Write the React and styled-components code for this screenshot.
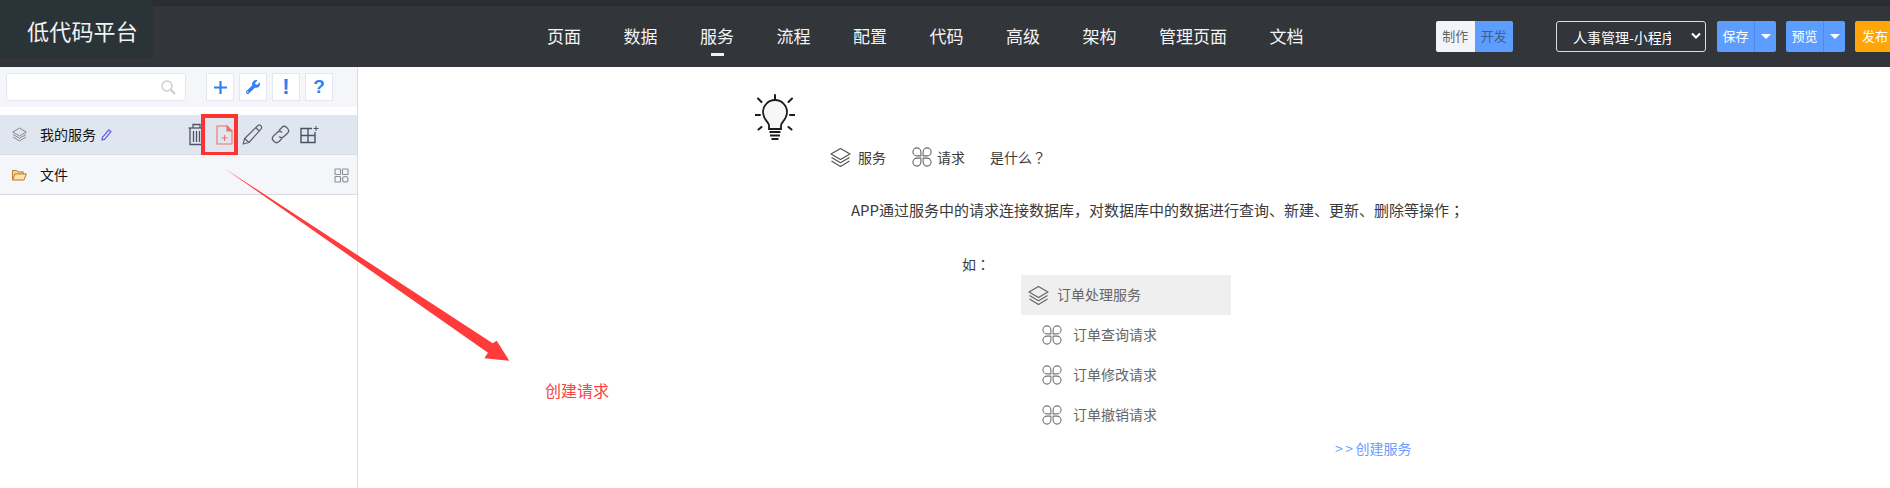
import React from "react";
import styled, { createGlobalStyle } from "styled-components";
import { FaWrench } from "react-icons/fa";

const GlobalStyle = createGlobalStyle`
  html, body {
    margin: 0;
    padding: 0;
    background: #fff;
  }
  body {
    font-family: "Noto Sans CJK SC", "Liberation Sans", sans-serif;
    overflow: hidden;
  }
  * {
    box-sizing: border-box;
  }
`;

const Page = styled.div`
  position: relative;
  width: 1890px;
  height: 488px;
  overflow: hidden;
  display: flex;
  flex-direction: column;
`;

/* header */
const Header = styled.header`
  flex: none;
  height: 67px;
  display: flex;
  background: #32353a;
  border-top: 5px solid #2c2d31;
  box-shadow: inset 0 1px 0 #26272a;
`;

const Logo = styled.div`
  flex: none;
  width: 153px;
  height: 58px;
  margin-top: -5px;
  padding: 12px 0 0 27px;
  background: #2a3338;
  color: #f2f2f2;
  font-size: 22px;
  line-height: 37px;
  letter-spacing: 0.2px;
`;

const Nav = styled.nav`
  flex: none;
  display: flex;
  gap: 42.5px;
  margin-left: 394px;
  width: 889px;
`;

const NavItem = styled.a`
  position: relative;
  color: #f4f4f4;
  font-size: 17px;
  line-height: 24px;
  padding-top: 19px;

  ${(p) =>
    p.$active &&
    `
    &::after {
      content: "";
      position: absolute;
      left: 11px;
      top: 48px;
      width: 13px;
      height: 3px;
      background: #f0f0f0;
    }
  `}
`;

const Toggle = styled.div`
  flex: none;
  display: flex;
  width: 77px;
  height: 31px;
  margin-top: 16px;
  border-radius: 2px;
  overflow: hidden;
`;

const ToggleSide = styled.span`
  flex: 1;
  text-align: center;
  font-size: 13px;
  line-height: 29px;
  color: ${(p) => (p.$on ? "#3f5f8f" : "#666")};
  background: ${(p) => (p.$on ? "#5c9dff" : "#f2f4fa")};
`;

const SelectWrap = styled.div`
  position: relative;
  flex: none;
  width: 150px;
  height: 31px;
  margin: 16px 0 0 43px;

  svg {
    position: absolute;
    right: 5px;
    top: 11px;
    pointer-events: none;
  }
`;

const AppSelect = styled.select`
  appearance: none;
  width: 100%;
  height: 100%;
  padding: 0 34px 0 16px;
  background: #32353a;
  border: 1px solid #ddd;
  border-radius: 3px;
  color: #fff;
  font-family: inherit;
  font-size: 14px;
`;

const SplitButton = styled.div`
  flex: none;
  display: flex;
  width: 59px;
  height: 31px;
  margin: 16px 0 0 ${(p) => p.$gap}px;
  border-radius: 2px;
  overflow: hidden;
  background: #5c9dff;
  color: #fff;
`;

const SplitLabel = styled.span`
  width: 38px;
  text-align: center;
  font-size: 13px;
  line-height: 29px;
  border-right: 1px solid #4d8be8;
`;

const SplitCaret = styled.span`
  flex: 1;
  display: flex;
  align-items: center;
  justify-content: center;

  &::before {
    content: "";
    border-left: 5px solid transparent;
    border-right: 5px solid transparent;
    border-top: 5px solid #fff;
  }
`;

const PublishButton = styled.span`
  flex: none;
  width: 40px;
  height: 31px;
  margin: 16px 0 0 10px;
  padding-left: 7px;
  border-radius: 2px;
  background: #ffa50a;
  color: #fff;
  font-size: 13px;
  line-height: 29px;
`;

/* body */
const Body = styled.div`
  flex: 1;
  display: flex;
  min-height: 0;
`;

const Sidebar = styled.aside`
  flex: none;
  width: 358px;
  border-right: 1px solid #dcdcdc;
`;

const SearchBar = styled.div`
  height: 40px;
  padding: 6px 0 0 6px;
  display: flex;
  background: #f5f6fa;
`;

const SearchBox = styled.div`
  width: 180px;
  height: 28px;
  display: flex;
  align-items: center;
  justify-content: flex-end;
  padding-right: 9px;
  background: #fff;
  border: 1px solid #e4e7f0;
  border-radius: 3px;
`;

const ToolButton = styled.span`
  width: 28px;
  height: 28px;
  margin-left: ${(p) => p.$gap || 5}px;
  display: flex;
  align-items: center;
  justify-content: center;
  background: #fff;
  border: 1px solid #e4e7f0;
  color: #2f80f5;
  font-family: "Liberation Sans", sans-serif;
  font-size: ${(p) => p.$size || 19}px;
  font-weight: 700;
`;

const TreeRow = styled.div`
  position: relative;
  height: 40px;
  margin-top: ${(p) => p.$top || 0}px;
  display: flex;
  align-items: center;
  padding-left: 12px;
  background: ${(p) => (p.$selected ? "#e0e6f0" : "#f5f6fa")};
  border-bottom: 1px solid #d9dce2;
  color: #111;
  font-size: 14px;
`;

const RowLabel = styled.span`
  margin: 0 0 2px ${(p) => p.$gap}px;
  line-height: 20px;
`;

const Actions = styled.div`
  position: absolute;
  left: 182px;
  top: 0;
  height: 39px;
  display: flex;
`;

const ActionSlot = styled.span`
  width: 28.25px;
  display: flex;
  align-items: center;
  justify-content: center;
`;

const RedFrame = styled.div`
  position: absolute;
  left: 201px;
  top: -1px;
  width: 37px;
  height: 42px;
  border: 4px solid #fb3333;
`;

const EndIcon = styled.span`
  position: absolute;
  left: 334px;
  top: 13px;
  display: flex;
`;

const Main = styled.main`
  flex: 1;
  display: flex;
  flex-direction: column;
  align-items: flex-start;
  padding-top: 27px;
  color: #3a3a3a;
  font-size: 14px;
`;

const Bulb = styled.div`
  margin-left: 397px;
  height: 48px;
  display: flex;
`;

const Intro = styled.div`
  margin: 5px 0 0 472px;
  height: 20px;
  display: flex;
  align-items: center;
  line-height: 20px;
`;

const IntroPart = styled.span`
  display: flex;
  margin-left: ${(p) => p.$gap}px;
`;

/* full-width punctuation sits centred in the reference */
const Punct = styled.span`
  font-family: "Noto Sans CJK TC", sans-serif;
`;

const Description = styled.p`
  margin: 33px 0 0 493px;
  font-size: 15px;
  line-height: 20px;
  white-space: nowrap;
`;

const ExampleLabel = styled.div`
  margin: 34px 0 0 604px;
  line-height: 20px;
`;

const Tree = styled.div`
  margin: 1px 0 0 663px;
  width: 210px;
  color: #666;

  span {
    margin-bottom: 2px;
  }
`;

const ServiceRow = styled.div`
  height: 40px;
  display: flex;
  align-items: center;
  padding-left: 7px;
  gap: 8px;
  background: #efefef;
`;

const RequestRow = styled.div`
  height: 40px;
  display: flex;
  align-items: center;
  padding-left: 21px;
  gap: 11px;
`;

const CreateLink = styled.a`
  margin: 3px 0 0 977px;
  color: #6a9dff;
  line-height: 20px;
  white-space: nowrap;
`;

const Chevrons = styled.span`
  letter-spacing: 2.5px;
`;

const Callout = styled.span`
  position: absolute;
  left: 545px;
  top: 378px;
  color: #f84545;
  font-size: 16px;
  line-height: 24px;
`;

const ArrowLayer = styled.svg`
  position: absolute;
  left: 0;
  top: 0;
  pointer-events: none;
`;

/* icons */
const LayersIcon = ({ size = 21, color = "#555", width = 1.2 }) => (
  <svg width={size} height={size} viewBox="0 0 21 21" fill="none" stroke={color} strokeWidth={width} strokeLinejoin="round">
    <path d="M10.5 1.5 20 7l-9.5 5.5L1 7z" />
    <path d="M1.5 10.5l9 5.2 9-5.2" />
    <path d="M1.5 14l9 5.5 9-5.5" />
  </svg>
);

const CloverIcon = ({ size = 20, color = "#777" }) => (
  <svg width={size} height={size} viewBox="0 0 20 20" fill="none" stroke={color} strokeWidth="1.1" strokeLinejoin="round">
    <path d="M8.9 8.900H4.900a4 4 0 1 1 4-4z" />
    <path d="M11.100 8.900h4a4 4 0 1 0-4-4z" />
    <path d="M8.900 11.100H4.900a4 4 0 1 0 4 4z" />
    <path d="M11.100 11.100h4a4 4 0 1 1-4 4z" />
  </svg>
);

const SearchIcon = () => (
  <svg width="15" height="15" viewBox="0 0 15 15" fill="none" stroke="#ccc" strokeWidth="1.4">
    <circle cx="6" cy="6" r="5" />
    <path d="M9.800 9.800 14 14" strokeWidth="2" />
  </svg>
);

const PlusIcon = () => (
  <svg width="13" height="13" viewBox="0 0 13 13" stroke="#2f80f5" strokeWidth="2.200">
    <path d="M6.500 0v13M0 6.500h13" />
  </svg>
);

const TinyPencil = () => (
  <svg width="11" height="12" viewBox="0 0 11 12" fill="none" stroke="#5a5ce6" strokeWidth="1.200" strokeLinejoin="round" style={{ marginLeft: 5 }}>
    <path d="M7.800 1 10 2.600 3.600 10.400 1 11l.4-2.600z" />
  </svg>
);

const TrashIcon = () => (
  <svg width="17" height="23" viewBox="0 0 17 23" fill="none" stroke="#4f5568" strokeWidth="1.300">
    <path d="M0.500 5h16" />
    <path d="M5 5V1.500h7V5" />
    <path d="M2 5v16.500h13V5" />
    <path d="M5.500 8v11M8.500 8v11M11.500 8v11" />
  </svg>
);

const FilePlusIcon = () => (
  <svg width="17" height="20" viewBox="0 0 17 20" fill="none" stroke="#f0706a" strokeWidth="1.100">
    <path d="M1 1h10l5 5v13H1z" />
    <path d="M11 1v5h5z" fill="#f0706a" />
    <path d="M8.500 10v6M5.500 13h6" />
  </svg>
);

const PencilIcon = () => (
  <svg width="21" height="21" viewBox="0 0 21 21" fill="none" stroke="#5b6170" strokeWidth="1.200" strokeLinejoin="round">
    <path d="M16 1.500c1-.8 2.300-.4 3 .4.800.9.900 2 .1 3L7 18.500 1.200 20l1.500-5.500z" />
    <path d="M13.800 3.700l3.600 3.300M2.700 14.500l4.300 4" />
  </svg>
);

const LinkIcon = () => (
  <svg width="19" height="19" viewBox="0 0 19 19" fill="none" stroke="#5b6170" strokeWidth="1.300">
    <path d="M8 5.500 10.800 2.500a3.400 3.400 0 0 1 4.800 0l.9.9a3.400 3.400 0 0 1 0 4.800L13 11.500a3.400 3.400 0 0 1-4.800 0" />
    <path d="M11 7.500a3.400 3.400 0 0 0-4.800 0L2.500 11a3.400 3.400 0 0 0 0 4.800l.7.7a3.400 3.400 0 0 0 4.800 0L11 13.500" />
  </svg>
);

const TablePlusIcon = () => (
  <svg width="19" height="18" viewBox="0 0 19 18" fill="none" stroke="#4a5263" strokeWidth="1.400">
    <path d="M12 2.500H1v14h14V6" />
    <path d="M8 2.500v14M1 9.500h14" />
    <path d="M16 0v5M13.500 2.500h5" strokeWidth="1" />
  </svg>
);

const GridIcon = () => (
  <svg width="15" height="15" viewBox="0 0 15 15" fill="none" stroke="#8a8f99" strokeWidth="1.100">
    <rect x="1" y="1" width="5.500" height="5.500" rx="0.500" />
    <rect x="8.500" y="1" width="5.500" height="5.500" rx="0.500" />
    <rect x="1" y="8.500" width="5.500" height="5.500" rx="0.500" />
    <circle cx="11.250" cy="11.250" r="2.800" />
  </svg>
);

const FolderIcon = () => (
  <svg width="15" height="12" viewBox="0 0 15 12" stroke="#b97a26" strokeWidth="1" strokeLinejoin="round">
    <path d="M.6 11V1.500h4.200l1 1.400h5.400v2" fill="#f6d9a0" />
    <path d="M.6 11 3 4.900h11.400L12 11z" fill="#fbe3ae" />
  </svg>
);

const BulbIcon = () => (
  <svg width="40" height="48" viewBox="0 0 40 48" fill="none" stroke="#1c1c1c" strokeWidth="2">
    <path d="M20 0v5M3 3.500 6.500 7M37 3.500 33.500 7M0 20h5M35 20h5M6.500 32 3.500 34.500M33.500 32l3 2.500" strokeLinecap="round" transform="translate(0 1)" />
    <path
      d="M14 35v-4c0-2.500-6-5.500-6-13a12 12 0 0 1 24 0c0 7.500-6 10.500-6 13v4z"
      fill="#f7f7f7"
      strokeWidth="1.800"
    />
    <path d="M14.500 38h11M15 41.500h10M16.500 45h7" strokeWidth="2.200" />
  </svg>
);

const Chevron = () => (
  <svg width="10" height="8" viewBox="0 0 10 8" fill="none" stroke="#fff" strokeWidth="2">
    <path d="M1 1.500 5 5.500 9 1.500" />
  </svg>
);

const navItems = ["页面", "数据", "服务", "流程", "配置", "代码", "高级", "架构", "管理页面", "文档"];
const requests = ["订单查询请求", "订单修改请求", "订单撤销请求"];

export default function App() {
  return (
    <Page>
      <GlobalStyle />
      <Header>
        <Logo>低代码平台</Logo>
        <Nav>
          {navItems.map((item) => (
            <NavItem key={item} $active={item === "服务"}>
              {item}
            </NavItem>
          ))}
        </Nav>
        <Toggle>
          <ToggleSide>制作</ToggleSide>
          <ToggleSide $on>开发</ToggleSide>
        </Toggle>
        <SelectWrap>
          <AppSelect defaultValue="hr">
            <option value="hr">人事管理-小程序</option>
          </AppSelect>
          <Chevron />
        </SelectWrap>
        <SplitButton $gap={11}>
          <SplitLabel>保存</SplitLabel>
          <SplitCaret />
        </SplitButton>
        <SplitButton $gap={10}>
          <SplitLabel>预览</SplitLabel>
          <SplitCaret />
        </SplitButton>
        <PublishButton>发布</PublishButton>
      </Header>
      <Body>
        <Sidebar>
          <SearchBar>
            <SearchBox>
              <SearchIcon />
            </SearchBox>
            <ToolButton $gap={20}>
              <PlusIcon />
            </ToolButton>
            <ToolButton>
              <FaWrench size={14} />
            </ToolButton>
            <ToolButton $size={22}>!</ToolButton>
            <ToolButton>?</ToolButton>
          </SearchBar>
          <TreeRow $selected $top={8}>
            <LayersIcon size={15} color="#888" width={1.4} />
            <RowLabel $gap={13}>我的服务</RowLabel>
            <TinyPencil />
            <Actions>
              <ActionSlot>
                <TrashIcon />
              </ActionSlot>
              <ActionSlot>
                <FilePlusIcon />
              </ActionSlot>
              <ActionSlot>
                <PencilIcon />
              </ActionSlot>
              <ActionSlot>
                <LinkIcon />
              </ActionSlot>
              <ActionSlot>
                <TablePlusIcon />
              </ActionSlot>
            </Actions>
            <RedFrame />
          </TreeRow>
          <TreeRow>
            <FolderIcon />
            <RowLabel $gap={13}>文件</RowLabel>
            <EndIcon>
              <GridIcon />
            </EndIcon>
          </TreeRow>
        </Sidebar>
        <Main>
          <Bulb>
            <BulbIcon />
          </Bulb>
          <Intro>
            <LayersIcon />
            <IntroPart $gap={7}>服务</IntroPart>
            <IntroPart $gap={26}>
              <CloverIcon color="#666" />
            </IntroPart>
            <IntroPart $gap={5}>请求</IntroPart>
            <IntroPart $gap={25}>
              是什么<Punct>？</Punct>
            </IntroPart>
          </Intro>
          <Description>
            APP通过服务中的请求连接数据库，对数据库中的数据进行查询、新建、更新、删除等操作<Punct>；</Punct>
          </Description>
          <ExampleLabel>
            如<Punct>：</Punct>
          </ExampleLabel>
          <Tree>
            <ServiceRow>
              <LayersIcon color="#666" />
              <span>订单处理服务</span>
            </ServiceRow>
            {requests.map((item) => (
              <RequestRow key={item}>
                <CloverIcon />
                <span>{item}</span>
              </RequestRow>
            ))}
          </Tree>
          <CreateLink>
            <Chevrons>&gt;&gt;</Chevrons>创建服务
          </CreateLink>
        </Main>
      </Body>
      <ArrowLayer width="1890" height="488" viewBox="0 0 1890 488">
        <path d="M224 168 492.700 343.300 496.700 340.700 509.300 360.700 484.300 358.300 488 352.700z" fill="#ff3b3b" />
      </ArrowLayer>
      <Callout>创建请求</Callout>
    </Page>
  );
}
